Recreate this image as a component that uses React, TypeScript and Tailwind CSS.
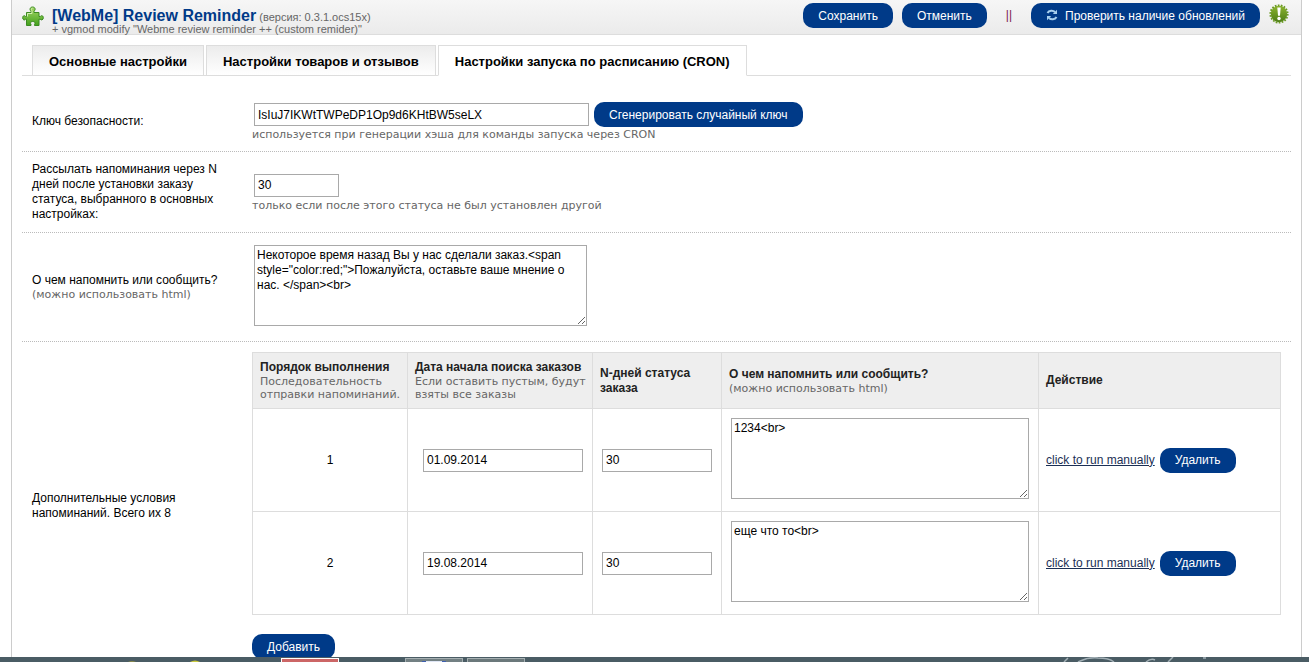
import { ReactNode, useState } from "react";

interface Reminder {
  id: number;
  date: string;
  days: string;
  text: string;
}

const tabs = ["Основные настройки", "Настройки товаров и отзывов", "Настройки запуска по расписанию (CRON)"];

const initialReminders: Reminder[] = [
  { id: 1, date: "01.09.2014", days: "30", text: "1234<br>" },
  { id: 2, date: "19.08.2014", days: "30", text: "еще что то<br>" },
];

const inputClass = "h-[23px] border border-[#a9a9a9] bg-white px-[3px] text-[12px] text-black";
const textareaClass =
  "block h-[81px] resize border border-[#a9a9a9] bg-white px-[2px] py-[2px] text-[12px] leading-[15px] text-black";
const headCell = "border border-[#ddd] pl-[7px] text-left text-[#222]";
const bodyCell = "h-[103px] border border-[#ddd] px-[7px]";

const PuzzleIcon = () => (
  <svg width="22" height="22" viewBox="0 0 22 22" aria-hidden="true">
    <defs>
      <linearGradient id="puzzle" x1="0" y1="0" x2="0" y2="1">
        <stop offset="0" stopColor="#a5d867" />
        <stop offset="1" stopColor="#43a01c" />
      </linearGradient>
    </defs>
    <path
      d="M4.5 6.5H9V5.2C8 4.4 7.9 3.3 8.2 2.5C8.6 1.4 9.6 1 10.6 1C11.7 1 12.7 1.5 13 2.5C13.3 3.5 13 4.5 12 5.2V6.5H17V10.5H18.2C18.8 9.7 19.5 9.5 20.1 9.7C21 10 21.3 10.9 21.3 11.8C21.3 12.8 20.9 13.6 20 13.9C19.3 14.1 18.7 13.8 18.2 13.2H17V19.5H12.5V18.3C13.2 17.5 13.1 16.7 12.6 16.2C12.1 15.7 11.5 15.5 10.7 15.5C9.9 15.5 9.2 15.7 8.8 16.3C8.4 16.9 8.4 17.6 9 18.3V19.5H4.5V13.2H3.6C3.1 13.9 2.4 14.1 1.8 13.9C1 13.6 0.7 12.7 0.7 11.8C0.7 10.9 1 10 1.9 9.7C2.5 9.5 3.1 9.8 3.6 10.5H4.5Z"
      fill="url(#puzzle)"
      stroke="#3b8a22"
      strokeWidth="1"
    />
    <path d="M5.5 10.5V7.5H10V4.7C9 3.9 9 2.2 10.6 2.1" fill="none" stroke="#d3efb0" strokeWidth="1" />
  </svg>
);

const RefreshIcon = () => (
  <svg className="mb-[3px]" width="12" height="12" viewBox="0 0 12 12" fill="none" stroke="#a9d0ee" strokeWidth="2" aria-hidden="true">
    <path d="M1.5 4C3 1.2 7 1 9 3" />
    <path d="M11 0.8V5H6.8Z" fill="#a9d0ee" stroke="none" />
    <path d="M10.5 8C9 10.8 5 11 3 9" />
    <path d="M1 11.2V7H5.2Z" fill="#a9d0ee" stroke="none" />
  </svg>
);

const AlertBadge = () => (
  <svg className="mb-[3px]" width="20" height="20" viewBox="0 0 20 20" aria-hidden="true">
    <defs>
      <linearGradient id="badge" x1="0" y1="0" x2="0" y2="1">
        <stop offset="0" stopColor="#8db52f" />
        <stop offset="1" stopColor="#4c7d16" />
      </linearGradient>
    </defs>
    <circle cx="10" cy="10" r="8.2" fill="url(#badge)" />
    <circle cx="10" cy="10" r="8.7" fill="none" stroke="#6a9a22" strokeWidth="1.8" strokeDasharray="1.7 1.34" />
    <path d="M8.3 3.5H11.7L11 11.8H9Z" fill="#fff" />
    <circle cx="10" cy="14.5" r="1.7" fill="#fff" />
  </svg>
);

const PillButton = ({ children, onClick }: { children: ReactNode; onClick?: () => void }) => (
  <button
    type="button"
    onClick={onClick}
    className="inline-flex h-[25px] shrink-0 items-center gap-[7px] rounded-[10px] bg-[#003a88] px-[15px] pt-px text-[12px] whitespace-nowrap text-white"
  >
    {children}
  </button>
);

const Hint = ({ children }: { children: ReactNode }) => (
  <span className="block font-['DejaVu_Sans',Verdana,sans-serif] text-[11px] leading-[13px] font-normal text-[#666]">
    {children}
  </span>
);

const FormRow = ({ label, children }: { label: ReactNode; children: ReactNode }) => (
  <div className="grid grid-cols-[220px_minmax(0,1fr)] items-center border-b border-dotted border-[#bbb]">
    <div className="px-2.5 py-2.5">{label}</div>
    <div className="px-2.5 py-2.5">{children}</div>
  </div>
);

const Taskbar = () => (
  <div className="flex h-[5px] shrink-0 items-end overflow-hidden bg-[#4a5c64]">
    <svg className="shrink-0" width="281" height="5" viewBox="0 0 281 5" aria-hidden="true">
      <path d="M128 5Q132 3 136 5Z" fill="#8a8a4a" />
      <path d="M190 5Q195 2 200 5Z" fill="#c9c93c" />
    </svg>
    <div className="h-1 w-[58px] border-x border-t border-white bg-[#cc6666]" />
    <div className="ml-[66px] flex h-1 w-[58px] justify-center border-x border-t border-[#a5afb1] bg-[#738083]">
      <span className="mt-[2px] h-px w-6 border-x-4 border-[#3f5fb0] bg-[#dfe6f5]" />
    </div>
    <div className="ml-1 h-1 w-[58px] border-x border-t border-[#a5afb1] bg-[#6b787b]" />
    <svg className="mr-[94px] ml-auto" width="152" height="5" viewBox="0 0 152 5" fill="none" stroke="#a3b0b6" aria-hidden="true">
      <path d="M1 5L5 1M15 5Q25 0 35 1Q46 1 51 5M83 5Q88 1 92 3M105 5L110 0M140 1H143" strokeWidth="1.5" />
    </svg>
  </div>
);

const App = () => {
  const [activeTab, setActiveTab] = useState(2);
  const [reminders, setReminders] = useState(initialReminders);

  const addReminder = () => {
    setReminders((prev) => [...prev, { id: Date.now(), date: "", days: "30", text: "" }]);
  };

  const removeReminder = (id: number) => {
    setReminders((prev) => prev.filter((item) => item.id !== id));
  };

  return (
    <div className="flex h-screen flex-col bg-white font-['Liberation_Sans',Arial,sans-serif] text-[12px] leading-[15px] text-black">
      <main className="mr-[7px] ml-[11px] min-h-0 flex-1 overflow-hidden border-x border-[#ccc]">
        <header className="flex h-[35px] items-start justify-between border-b border-[#ddd] bg-linear-to-b from-[#f6f6f6] to-[#ebebeb] pr-3 pl-2.5">
          <div className="flex gap-2 pt-[6px]">
            <PuzzleIcon />
            <div className="pt-[2px] text-[11px] text-[#666]">
              <h1 className="leading-4 font-normal">
                <span className="text-[16px] font-bold text-[#003a88]">[WebMe] Review Reminder</span> (версия: 0.3.1.ocs15x)
              </h1>
              <p className="leading-[8px]">+ vgmod modify "Webme review reminder ++ (custom remider)"</p>
            </div>
          </div>
          <div className="flex items-center gap-[9px] pt-[3px]">
            <PillButton>Сохранить</PillButton>
            <PillButton>Отменить</PillButton>
            <span className="px-2.5 text-[#7b1650]">||</span>
            <PillButton>
              <RefreshIcon />
              Проверить наличие обновлений
            </PillButton>
            <AlertBadge />
          </div>
        </header>

        <nav className="mx-2.5 mt-2.5 flex gap-[2px] border-b border-[#ddd] pl-2.5">
          {tabs.map((tab, index) => (
            <button
              key={tab}
              type="button"
              onClick={() => setActiveTab(index)}
              className={`-mb-px h-[31px] border border-[#ddd] px-4 pt-px text-[13px] font-bold ${
                index === activeTab ? "border-b-white bg-white" : "bg-linear-to-b from-[#ececec] to-white"
              }`}
            >
              {tab}
            </button>
          ))}
        </nav>

        <form className="mx-2.5 pt-4">
          <FormRow label={<label htmlFor="key">Ключ безопасности:</label>}>
            <div className="mb-px flex items-center gap-[5px] pl-[2px]">
              <input id="key" className={`${inputClass} w-[335px]`} defaultValue="IsIuJ7IKWtTWPeDP1Op9d6KHtBW5seLX" />
              <PillButton>Сгенерировать случайный ключ</PillButton>
            </div>
            <Hint>используется при генерации хэша для команды запуска через CRON</Hint>
          </FormRow>

          <FormRow
            label={
              <label htmlFor="days">
                Рассылать напоминания через N дней после установки заказу статуса, выбранного в основных настройках:
              </label>
            }
          >
            <div className="mb-px flex h-[25px] items-center pl-[2px]">
              <input id="days" className={`${inputClass} w-[85px]`} defaultValue="30" />
            </div>
            <Hint>только если после этого статуса не был установлен другой</Hint>
          </FormRow>

          <FormRow
            label={
              <label htmlFor="message">
                О чем напомнить или сообщить?
                <Hint>(можно использовать html)</Hint>
              </label>
            }
          >
            <div className="pt-[2px] pb-[5px] pl-[2px]">
              <textarea
                id="message"
                className={`${textareaClass} w-[333px]`}
                defaultValue={
                  'Некоторое время назад Вы у нас сделали заказ.<span style="color:red;">Пожалуйста, оставьте ваше мнение о нас. </span><br>'
                }
              />
            </div>
          </FormRow>

          <FormRow label="Дополнительные условия напоминаний. Всего их 8">
            <table className="mb-[19px] w-full table-fixed border-collapse">
              <colgroup>
                <col className="w-[155px]" />
                <col className="w-[185px]" />
                <col className="w-[129px]" />
                <col className="w-[317px]" />
                <col />
              </colgroup>
              <thead className="h-14 bg-[#eee]">
                <tr>
                  <th className={headCell}>
                    Порядок выполнения
                    <Hint>Последовательность отправки напоминаний.</Hint>
                  </th>
                  <th className={headCell}>
                    Дата начала поиска заказов
                    <Hint>Если оставить пустым, будут взяты все заказы</Hint>
                  </th>
                  <th className={headCell}>N-дней статуса заказа</th>
                  <th className={headCell}>
                    О чем напомнить или сообщить?
                    <Hint>(можно использовать html)</Hint>
                  </th>
                  <th className={headCell}>Действие</th>
                </tr>
              </thead>
              <tbody>
                {reminders.map((item, index) => (
                  <tr key={item.id}>
                    <td className={`${bodyCell} text-center`}>{index + 1}</td>
                    <td className={bodyCell}>
                      <input aria-label="Дата начала поиска заказов" className={`${inputClass} ml-2 w-40`} defaultValue={item.date} />
                    </td>
                    <td className={bodyCell}>
                      <input aria-label="N-дней статуса заказа" className={`${inputClass} ml-[2px] w-[110px]`} defaultValue={item.days} />
                    </td>
                    <td className={bodyCell}>
                      <textarea
                        aria-label="О чем напомнить или сообщить?"
                        className={`${textareaClass} mb-[3px] ml-[2px] w-[298px]`}
                        defaultValue={item.text}
                      />
                    </td>
                    <td className={bodyCell}>
                      <div className="flex items-center gap-[5px]">
                        <a href="#run" className="text-[#1b2f55] underline">
                          click to run manually
                        </a>
                        <PillButton onClick={() => removeReminder(item.id)}>Удалить</PillButton>
                      </div>
                    </td>
                  </tr>
                ))}
              </tbody>
            </table>
            <PillButton onClick={addReminder}>Добавить</PillButton>
          </FormRow>
        </form>
      </main>
      <Taskbar />
    </div>
  );
};

export default App;
